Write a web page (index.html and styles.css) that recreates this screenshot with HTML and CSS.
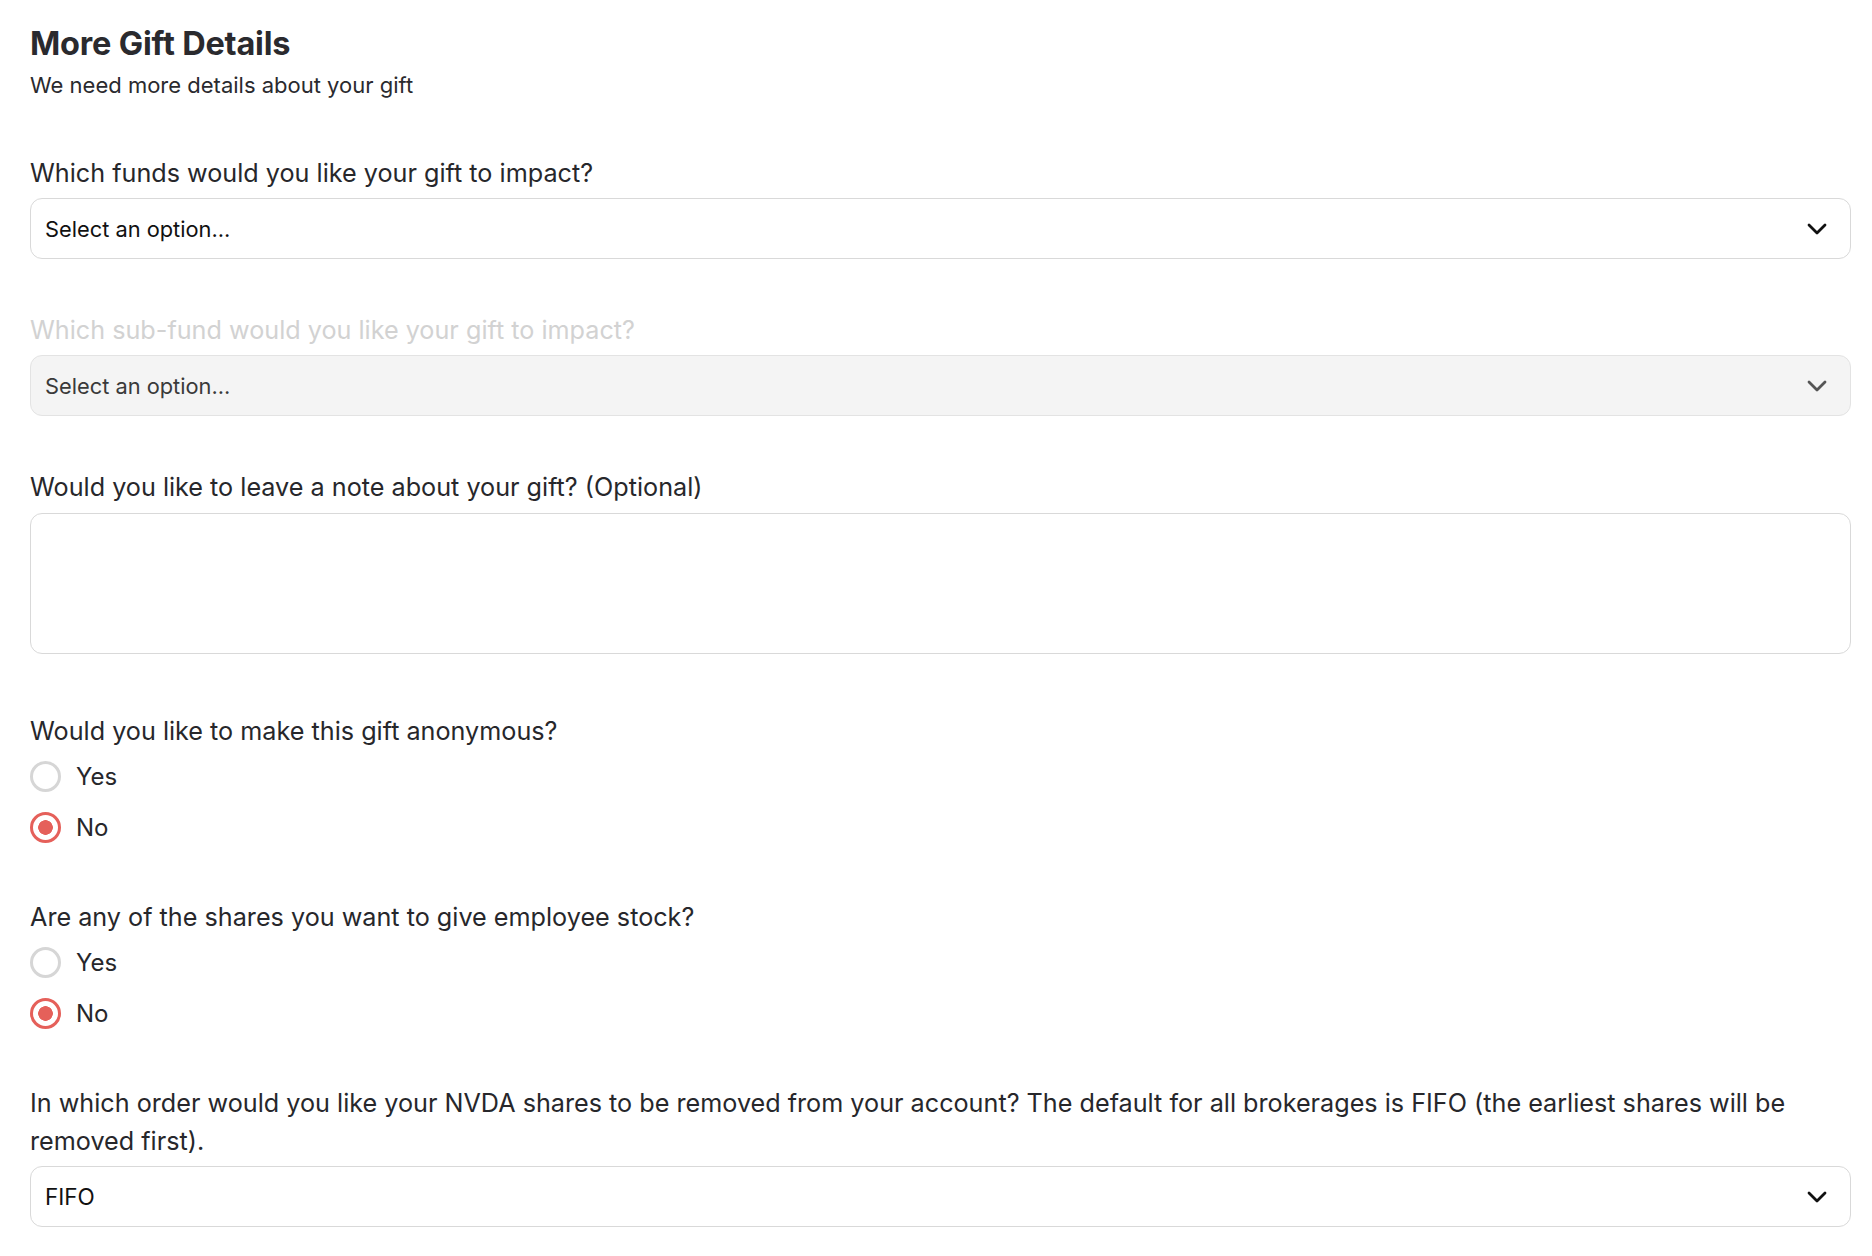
FILE: index.html
```html
<!DOCTYPE html>
<html lang="en">
<head>
<meta charset="utf-8">
<title>More Gift Details</title>
<link rel="stylesheet" href="styles.css">
</head>
<body>
<main class="page">
  <header class="header">
    <h1 class="title">More Gift Details</h1>
    <p class="subtitle">We need more details about your gift</p>
  </header>

  <form class="form">
    <div class="field">
      <div class="label">Which funds would you like your gift to impact?</div>
      <div class="select">
        <span class="select-text">Select an option...</span>
        <svg class="chev" width="20" height="12" viewBox="0 0 20 12"><polyline points="2,2 10,10 18,2" fill="none" stroke="#111" stroke-width="2.8" stroke-linecap="round" stroke-linejoin="round"/></svg>
      </div>
    </div>

    <div class="field">
      <div class="label label-disabled">Which sub-fund would you like your gift to impact?</div>
      <div class="select select-disabled">
        <span class="select-text">Select an option...</span>
        <svg class="chev" width="20" height="12" viewBox="0 0 20 12"><polyline points="2,2 10,10 18,2" fill="none" stroke="#555" stroke-width="2.8" stroke-linecap="round" stroke-linejoin="round"/></svg>
      </div>
    </div>

    <div class="field field-note">
      <div class="label">Would you like to leave a note about your gift? (Optional)</div>
      <textarea class="note" aria-label="Note"></textarea>
    </div>

    <div class="field field-radio">
      <div class="label">Would you like to make this gift anonymous?</div>
      <div class="radios">
        <label class="radio"><input type="radio" name="anon" class="radio-input"><span>Yes</span></label>
        <label class="radio"><input type="radio" name="anon" class="radio-input" checked><span>No</span></label>
      </div>
    </div>

    <div class="field field-radio">
      <div class="label">Are any of the shares you want to give employee stock?</div>
      <div class="radios">
        <label class="radio"><input type="radio" name="emp" class="radio-input"><span>Yes</span></label>
        <label class="radio"><input type="radio" name="emp" class="radio-input" checked><span>No</span></label>
      </div>
    </div>

    <div class="field">
      <div class="label">In which order would you like your NVDA shares to be removed from your account? The default for all brokerages is FIFO (the earliest shares will be removed first).</div>
      <div class="select">
        <span class="select-text select-text-value">FIFO</span>
        <svg class="chev" width="20" height="12" viewBox="0 0 20 12"><polyline points="2,2 10,10 18,2" fill="none" stroke="#111" stroke-width="2.8" stroke-linecap="round" stroke-linejoin="round"/></svg>
      </div>
    </div>
  </form>
</main>
</body>
</html>
```

FILE: styles.css
```css
* { box-sizing: border-box; }

html, body {
  margin: 0;
  padding: 0;
  background: #ffffff;
}

body {
  font-family: Inter, "Liberation Sans", Arial, sans-serif;
  color: #27272b;
}

.page {
  padding: 24px 21px 40px 30px;
}

.header {
  display: flex;
  flex-direction: column;
}

.title {
  margin: 0;
  font-size: 32.5px;
  line-height: 40px;
  font-weight: 700;
  color: #2a2a2e;
  letter-spacing: -0.2px;
}

.subtitle {
  margin: 7px 0 0;
  font-size: 22px;
  line-height: 28px;
  color: #2a2a2e;
}

.form {
  display: flex;
  flex-direction: column;
  gap: 52px;
  margin-top: 55px;
}

.field {
  display: flex;
  flex-direction: column;
  gap: 6px;
}

.field-note {
  gap: 7px;
  margin-bottom: 6px;
}

.field-radio {
  gap: 7px;
}

.label {
  font-size: 25.2px;
  line-height: 38px;
  color: #27272b;
}

.label-disabled {
  color: #d2d2d2;
}

.select {
  display: flex;
  align-items: center;
  justify-content: space-between;
  height: 61px;
  padding: 0 23px 0 14px;
  border: 1px solid #d9d9d9;
  border-radius: 12px;
  background: #ffffff;
}

.select-disabled {
  background: #f4f4f4;
  border-color: #e3e3e3;
}

.select-text {
  font-size: 21.8px;
  color: #111111;
}

.select-text-value {
  font-size: 22.5px;
}

.select-disabled .select-text {
  color: #3a3a3a;
}

.chev {
  display: block;
  flex: none;
}

.note {
  display: block;
  width: 100%;
  height: 141px;
  margin: 0;
  padding: 12px 14px;
  border: 1px solid #d9d9d9;
  border-radius: 12px;
  resize: none;
  font-family: inherit;
  font-size: 21px;
  background: #ffffff;
  outline: none;
}

.radios {
  display: flex;
  flex-direction: column;
  gap: 13px;
}

.radio {
  display: flex;
  align-items: center;
  gap: 15px;
  height: 38px;
  font-size: 24px;
  color: #27272b;
}

.radio-input {
  appearance: none;
  -webkit-appearance: none;
  margin: 0;
  width: 31px;
  height: 31px;
  flex: none;
  border-radius: 50%;
  border: 3px solid #d6d6d6;
  background: #ffffff;
}

.radio-input:checked {
  border-color: #e5605a;
  background: radial-gradient(circle, #e5605a 0 7px, #ffffff 7.6px);
}
```
